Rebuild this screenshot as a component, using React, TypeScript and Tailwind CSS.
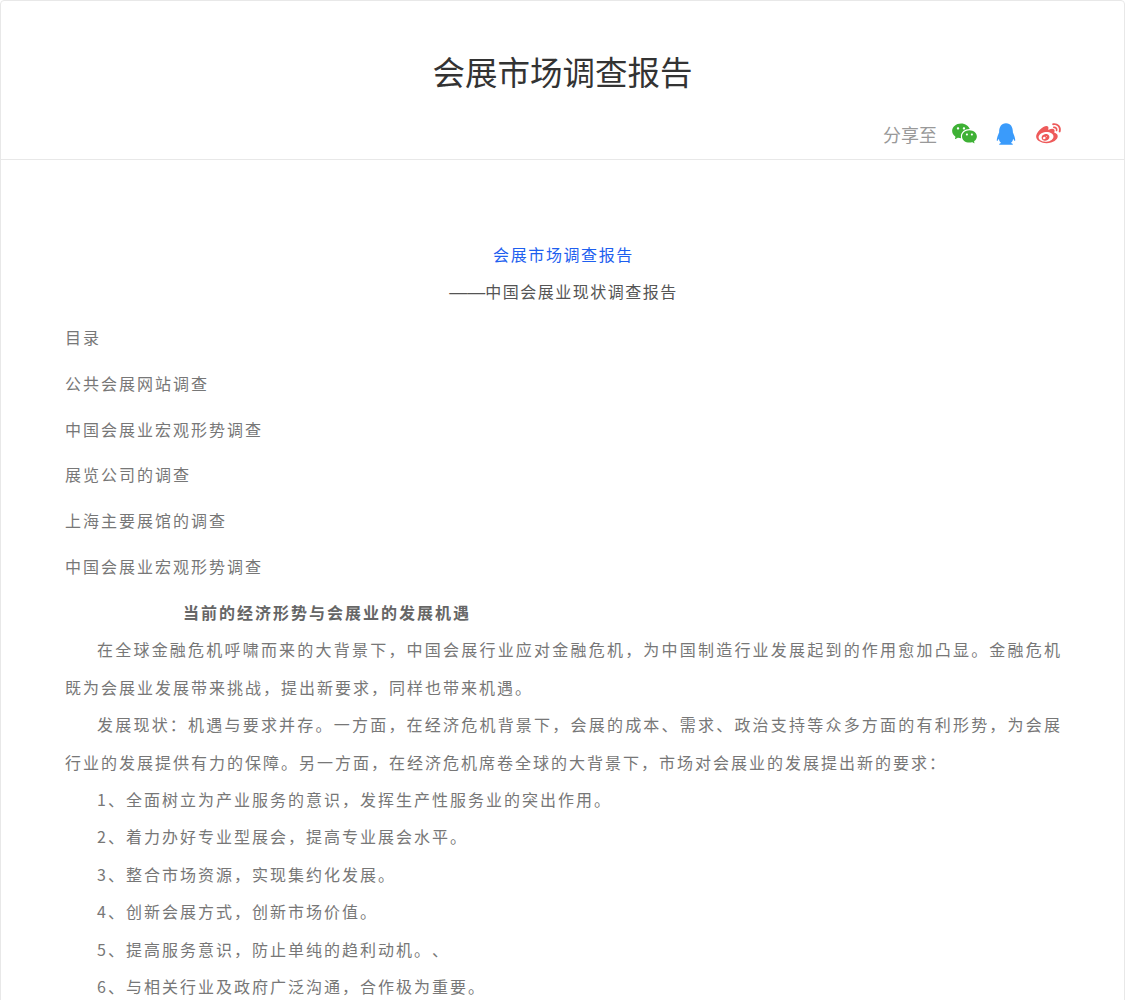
import { RiWechatFill, RiQqFill, RiWeiboFill } from 'react-icons/ri';

const toc = ['目录', '公共会展网站调查', '中国会展业宏观形势调查', '展览公司的调查', '上海主要展馆的调查', '中国会展业宏观形势调查'];

const points = [
  '1、全面树立为产业服务的意识，发挥生产性服务业的突出作用。',
  '2、着力办好专业型展会，提高专业展会水平。',
  '3、整合市场资源，实现集约化发展。',
  '4、创新会展方式，创新市场价值。',
  '5、提高服务意识，防止单纯的趋利动机。、',
  '6、与相关行业及政府广泛沟通，合作极为重要。',
];

export default function App() {
  return (
    <div className="h-screen overflow-hidden bg-white font-['Noto_Sans_CJK_SC',sans-serif]">
      <div className="min-h-[1040px] rounded-[4px] border border-[#e8e8e8]">
        {/* Header */}
        <header className="border-b border-[#e8e8e8] h-[159px] flex flex-col">
          <h1 className="mt-[47px] text-center text-[32.5px] leading-[46px] font-normal text-[#333]">会展市场调查报告</h1>
          <div className="mt-[26px] pr-[62px] flex items-center justify-end text-[#999]">
            <span className="text-[18px] leading-[24px] mr-[14px]">分享至</span>
            <RiWechatFill className="w-[27px] h-[27px] text-[#3eb135] mr-[15px]" />
            <RiQqFill className="w-[26px] h-[26px] text-[#3a9bfb] mr-[16px]" />
            <RiWeiboFill className="w-[27px] h-[27px] text-[#ee5a5a]" />
          </div>
        </header>

        {/* Article */}
        <main className="pl-[64px] pr-[62px] pt-[76px] text-[16px] leading-[37.44px] text-[#777] [text-spacing-trim:space-all]">
          <p className="text-center tracking-[1.6px] text-[#1e5fef]">会展市场调查报告</p>
          <p className="text-center tracking-[1.5px] text-[#555]">
            <span className="font-['Liberation_Sans',sans-serif] text-[18px] tracking-normal">——</span>中国会展业现状调查报告
          </p>
          <ul className="mt-[7.4px] mb-[8.4px] flex flex-col gap-[8.3px] tracking-[2px]">
            {toc.map((t, i) => (
              <li key={i}>{t}</li>
            ))}
          </ul>
          <div className="tracking-[2px]">
            <p className="pl-[118px] font-bold text-[#666]">当前的经济形势与会展业的发展机遇</p>
            <p className="indent-[32px] text-justify">
              在全球金融危机呼啸而来的大背景下，中国会展行业应对金融危机，为中国制造行业发展起到的作用愈加凸显。金融危机既为会展业发展带来挑战，提出新要求，同样也带来机遇。
            </p>
            <p className="indent-[32px] text-justify">
              发展现状：机遇与要求并存。一方面，在经济危机背景下，会展的成本、需求、政治支持等众多方面的有利形势，为会展行业的发展提供有力的保障。另一方面，在经济危机席卷全球的大背景下，市场对会展业的发展提出新的要求：
            </p>
            {points.map((t) => (
              <p key={t} className="indent-[32px]">{t}</p>
            ))}
          </div>
        </main>
      </div>
    </div>
  );
}
